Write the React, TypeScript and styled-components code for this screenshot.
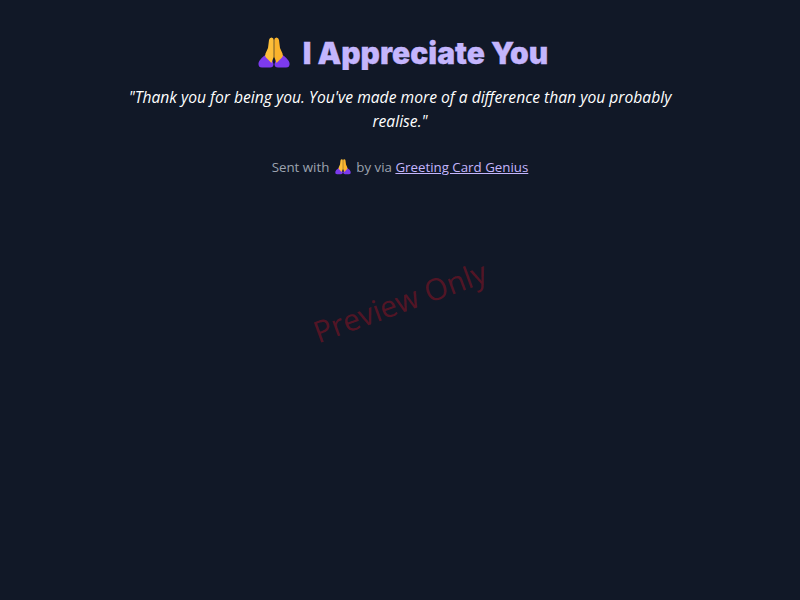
import React from "react";
import styled, { createGlobalStyle } from "styled-components";

const Global = createGlobalStyle`
  html, body { margin: 0; padding: 0; height: 100%; background: #111827; }
  #root { min-height: 100%; }
`;

const Page = styled.main`
  position: relative;
  height: 600px;
  overflow: hidden;
  box-sizing: border-box;
  padding-top: 32px;
  background: #111827;
  font-family: "Open Sans", "Noto Sans", sans-serif;
  display: flex;
  flex-direction: column;
  align-items: center;
  text-align: center;
`;

const Title = styled.h1`
  margin: 0;
  padding-left: 6px;
  display: flex;
  align-items: center;
  gap: 13px;
  height: 42px;
  color: #c4b5fd;
  font-family: Inter, "Noto Sans", sans-serif;
  font-size: 30px;
  font-weight: 900;
  line-height: 42px;
  -webkit-text-stroke: 0.3px #c4b5fd;
`;

const Message = styled.p`
  margin: 11px 0 0;
  width: 560px;
  color: #fff;
  font-size: 15.65px;
  font-style: italic;
  line-height: 24px;
`;

const Footer = styled.p`
  margin: 22px 0 0;
  color: #9ca3af;
  font-size: 13.3px;
  line-height: 24px;
`;

const FooterIcon = styled.span`
  display: inline-block;
  margin: 0 2px;
  vertical-align: -3px;
  line-height: 0;
`;

const FooterLink = styled.a`
  color: #c4b5fd;
  text-decoration: underline;
`;

const Watermark = styled.div`
  position: absolute;
  left: 0;
  right: 0;
  top: 280px;
  text-align: center;
  color: rgba(225, 15, 35, 0.33);
  font-size: 30px;
  line-height: 44px;
  transform: rotate(-20deg);
  pointer-events: none;
`;

const Pray = ({ size }: { size: number }) => (
  <svg width={size} height={size} viewBox="0 0 32 32" aria-hidden="true">
    <path d="M9 17 Q2 21 0.5 26 Q0 30.5 4 30.5 L12 30.5 Q15.5 30.5 15.5 27 L13 20 Z" fill="#7c3aed" />
    <path d="M23 17 Q30 21 31.5 26 Q32 30.5 28 30.5 L20 30.5 Q16.5 30.5 16.5 27 L19 20 Z" fill="#7c3aed" />
    <path d="M11 3 Q11.5 0.5 13.5 0.5 Q15.7 0.5 15.7 3 L15.7 20 L13.5 26 L8 20.5 Q6.5 19 7.5 16.5 L10 11 Z" fill="#fdbf3a" />
    <path d="M21 3 Q20.5 0.5 18.5 0.5 Q16.3 0.5 16.3 3 L16.3 20 L18.5 26 L24 20.5 Q25.5 19 24.5 16.5 L22 11 Z" fill="#fab32c" />
  </svg>
);

export default function App() {
  return (
    <Page>
      <Global />
      <Title>
        <Pray size={32} />
        <span>I Appreciate You</span>
      </Title>
      <Message>"Thank you for being you. You've made more of a difference than you probably realise."</Message>
      <Footer>
        Sent with <FooterIcon><Pray size={16} /></FooterIcon> by via{" "}
        <FooterLink href="#">Greeting Card Genius</FooterLink>
      </Footer>
      <Watermark>Preview Only</Watermark>
    </Page>
  );
}
